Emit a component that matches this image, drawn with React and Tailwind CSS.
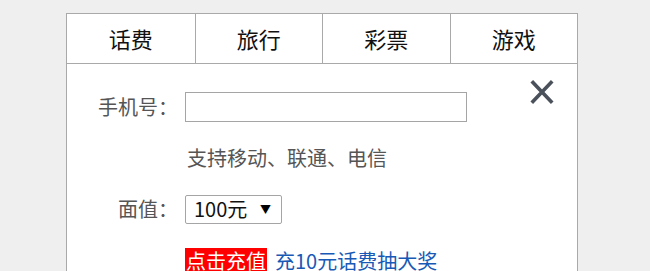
import { useState } from 'react';

const TABS = ['话费', '旅行', '彩票', '游戏'];

const FONT = { fontFamily: '"Noto Sans CJK SC", "Microsoft YaHei", sans-serif' };

export default function App() {
  const [active, setActive] = useState(0);

  return (
    <div className="h-[271px] w-[650px] overflow-hidden bg-[#efefef] pt-[13px] pl-[66px]" style={FONT}>
      <div className="w-[512px] border border-[#a9a9a9] bg-white">
        {/* tabs */}
        <div className="grid grid-cols-4 h-[50px] border-b border-[#a9a9a9]">
          {TABS.map((t, i) => (
            <button
              key={t}
              onClick={() => setActive(i)}
              className={[
                'flex items-center justify-center text-[22px] text-[#111] bg-white',
                i > 0 ? 'border-l border-[#a9a9a9]' : '',
              ].join(' ')}
            >
              {t}
            </button>
          ))}
        </div>

        {/* form */}
        <div className="relative h-[220px] pt-[28px]">
          <button className="absolute right-[21px] top-[15px] text-[#4a515a]">
            <svg width="28" height="26" viewBox="0 0 28 26" fill="none" stroke="currentColor" strokeWidth="3.6" strokeLinecap="square">
              <path d="M5 3.5L23 22.5M23 3.5L5 22.5" />
            </svg>
          </button>

          <div className="flex items-center">
            <label className="w-[111px] text-right text-[20px] leading-[30px] text-[#555]">手机号：</label>
            <input className="ml-[7px] h-[30px] w-[282px] border border-[#a5a5a5] bg-white outline-none" />
          </div>

          <div className="mt-[21px] pl-[120px] text-[20px] leading-[30px] text-[#555]">
            支持移动、联通、电信
          </div>

          <div className="mt-[21px] flex items-center">
            <label className="w-[111px] text-right text-[20px] leading-[30px] text-[#555]">面值：</label>
            <div className="ml-[7px] flex h-[29px] w-[97px] items-center justify-between rounded-[2px] border border-[#a5a5a5] bg-white pl-[8px] pr-[10px]">
              <span className="text-[20px] leading-none text-[#111]">100元</span>
              <span className="text-[11px] leading-none text-black">▼</span>
            </div>
          </div>

          <div className="mt-[24px] flex items-center pl-[118px] text-[20px] leading-[26px]">
            <span className="bg-[#ff0000] px-[1px] text-white">点击充值</span>
            <span className="ml-[8px] text-[#1859b5]">充10元话费抽大奖</span>
          </div>
        </div>
      </div>
    </div>
  );
}
